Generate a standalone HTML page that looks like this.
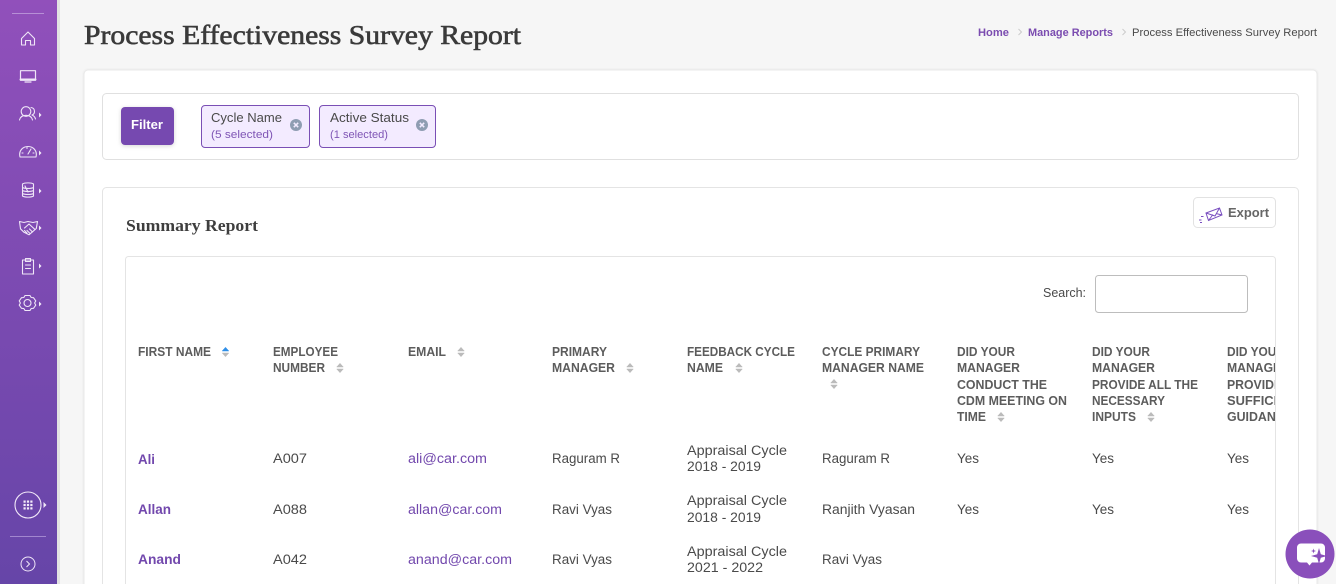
<!DOCTYPE html>
<html lang="en">
<head>
<meta charset="utf-8">
<title>Process Effectiveness Survey Report</title>
<style>
html,body{margin:0;padding:0;width:1336px;height:584px;overflow:hidden;background:#f6f6f6}
svg{position:absolute;left:0;top:0;display:block}
text{font-family:"Liberation Sans",sans-serif;white-space:pre}
.s{font-family:"Liberation Serif",serif}
.h{font-size:12.5px;font-weight:700;fill:#5c5c5c}
.d{font-size:13.5px;fill:#4a4a4a}
.l{font-size:13.5px;fill:#7248ad}
.b{font-size:13.5px;font-weight:700;fill:#7248ad}
.ic{fill:none;stroke:#efe6f7;stroke-width:1.1;stroke-linecap:round;stroke-linejoin:round}
</style>
</head>
<body>
<svg width="1336" height="584" viewBox="0 0 1336 584" xmlns="http://www.w3.org/2000/svg">
<defs>
<linearGradient id="g" x1="0" y1="0" x2="0" y2="1"><stop offset="0" stop-color="#9150bb"/><stop offset="1" stop-color="#6645a8"/></linearGradient>
<clipPath id="tc"><rect x="126" y="257" width="1149" height="327"/></clipPath>
<filter id="sh" x="-20%" y="-20%" width="140%" height="140%"><feDropShadow dx="0" dy="1" stdDeviation="2" flood-color="#000" flood-opacity=".16"/></filter>
<filter id="sh2" x="-5%" y="-5%" width="110%" height="110%"><feDropShadow dx="0" dy="0" stdDeviation="1" flood-color="#000" flood-opacity=".07"/></filter>
<g id="sort" fill="#bbb" stroke="#bbb" stroke-width=".5" stroke-linejoin="round"><path d="M-3.300 -1L0 -4.700L3.300 -1Z"/><path d="M-3.300 1L0 4.700L3.300 1Z"/></g>
<path id="tri" d="M0 -2.500L2.500 0L0 2.500Z" fill="#f1e8f8"/>
</defs>

<!-- sidebar -->
<rect x="57" y="0" width="3" height="584" fill="#e2e2e2"/>
<rect x="0" y="0" width="57" height="584" fill="url(#g)"/>
<rect x="12" y="13" width="32" height="1" fill="#b78fd6"/>
<g class="ic">
<path d="M21.500 38.500L28 32l6.500 6.500V45h-4v-4.500h-5V45h-4z"/>
<path d="M20.500 70.700h15v9.600h-15z" stroke-width="1.200"/><path d="M20.500 79.500h15" stroke-width="2"/><path d="M25 82h6" stroke-width="1.200"/>
<circle cx="26" cy="111.500" r="4.800"/><path d="M19.500 120c.8-3.500 3.500-4.700 6.500-4.700s5.700 1.200 6.500 4.700M31 107.500c2.500.3 3.500 2 3.500 4s-1 3-2.500 3.500c1.500.6 3 2 3.500 4"/>
<path d="M20 157c-1.500-6 2.500-10.500 8-10.500s9.500 4.500 8 10.500zM28 154l3-5M23 153h-1M34 153h-1M27 147v1.500"/>
<path d="M22.500 184c2-1.500 9-1.500 11 0v12c-2 1.500-9 1.500-11 0zM22.500 187.500c2 1.300 9 1.300 11 0M22.500 190.500c2 1.300 9 1.300 11 0M22.500 193.500c2 1.300 9 1.300 11 0M25 186l3 6"/>
<path d="M19.500 221.500l4.500 1 4-1 5 1 4.500-1-1.200 7-7.300 6.300-5-2.500-3.500-3.500zM24.500 228l4.500-4 6 5.500M27 233l-2.500-2.500M30 233.500l-3-3M32.500 232l-3-3"/>
<path d="M22.500 260h11v14h-11zM25.500 258.500h5v3h-5zM25.500 265h5M25.500 268.500h5"/>
<circle cx="27.500" cy="303" r="3.500"/><path d="M25 295.500h5l1.200 2 2.300.2 2.300 3.200-1.200 2.100 1.200 2.100-2.300 3.200-2.300.2-1.200 2h-5l-1.200-2-2.300-.2-2.300-3.200 1.200-2.100-1.200-2.100 2.300-3.200 2.300-.2z"/>
</g>
<use href="#tri" x="39" y="115"/><use href="#tri" x="39" y="153"/><use href="#tri" x="39" y="191"/><use href="#tri" x="39" y="228"/><use href="#tri" x="39" y="266"/><use href="#tri" x="39" y="304"/>
<circle cx="28" cy="505" r="13" fill="none" stroke="#f1e8f8" stroke-width="1.100"/>
<g fill="#f4ecfa"><rect x="23.500" y="500.500" width="2.200" height="2.200"/><rect x="26.900" y="500.500" width="2.200" height="2.200"/><rect x="30.300" y="500.500" width="2.200" height="2.200"/><rect x="23.500" y="503.900" width="2.200" height="2.200"/><rect x="26.900" y="503.900" width="2.200" height="2.200"/><rect x="30.300" y="503.900" width="2.200" height="2.200"/><rect x="23.500" y="507.300" width="2.200" height="2.200"/><rect x="26.900" y="507.300" width="2.200" height="2.200"/><rect x="30.300" y="507.300" width="2.200" height="2.200"/></g>
<path d="M43.500 502l3 3-3 3z" fill="#f1e8f8"/>
<rect x="10" y="536" width="36" height="1" fill="#a286cf"/>
<circle cx="28" cy="564" r="7" fill="none" stroke="#efe6f7" stroke-width="1"/>
<path d="M26.500 561l3 3-3 3" fill="none" stroke="#efe6f7" stroke-width="1"/>

<!-- header -->
<text class="s" x="84" y="44" font-size="27" fill="#3a3a3a" stroke="#3a3a3a" stroke-width=".6" textLength="437" lengthAdjust="spacingAndGlyphs">Process Effectiveness Survey Report</text>
<text x="978" y="36" font-size="11" font-weight="700" fill="#7b4cb0" textLength="31" lengthAdjust="spacingAndGlyphs">Home</text>
<path d="M1018.500 29l3 3-3 3M1122.500 29l3 3-3 3" fill="none" stroke="#ccc" stroke-width="1"/>
<text x="1028" y="36" font-size="11" font-weight="700" fill="#7b4cb0" textLength="85" lengthAdjust="spacingAndGlyphs">Manage Reports</text>
<text x="1132" y="36" font-size="11" fill="#4a4a4a" textLength="185" lengthAdjust="spacingAndGlyphs">Process Effectiveness Survey Report</text>

<!-- main card -->
<rect x="84" y="70" width="1233" height="530" rx="4" fill="#fff" stroke="#e8e8e8" filter="url(#sh2)"/>
<rect x="102.500" y="93.500" width="1196" height="66" rx="4" fill="#fff" stroke="#e0e0e0"/>
<rect x="121" y="107" width="53" height="38" rx="4" fill="#7649b0" filter="url(#sh)"/>
<text x="131" y="129" font-size="12.500" font-weight="700" fill="#fff" textLength="32" lengthAdjust="spacingAndGlyphs">Filter</text>

<rect x="201.500" y="105.500" width="108" height="42" rx="3.500" fill="#f3ebff" stroke="#7a4fb5"/>
<text x="211" y="122" font-size="13" fill="#4a4a4a" textLength="71" lengthAdjust="spacingAndGlyphs">Cycle Name</text>
<text x="211" y="138" font-size="11" fill="#7f55b5" textLength="62" lengthAdjust="spacingAndGlyphs">(5 selected)</text>
<circle cx="296" cy="125" r="6" fill="#8f9db2"/>
<path d="M293.800 122.800l4.400 4.400M298.200 122.800l-4.400 4.400" stroke="#f3ebff" stroke-width="1.500"/>

<rect x="319.500" y="105.500" width="116" height="42" rx="3.500" fill="#f3ebff" stroke="#7a4fb5"/>
<text x="330" y="122" font-size="13" fill="#4a4a4a" textLength="79" lengthAdjust="spacingAndGlyphs">Active Status</text>
<text x="330" y="138" font-size="11" fill="#7f55b5" textLength="58" lengthAdjust="spacingAndGlyphs">(1 selected)</text>
<circle cx="422" cy="125" r="6" fill="#8f9db2"/>
<path d="M419.800 122.800l4.400 4.400M424.200 122.800l-4.400 4.400" stroke="#f3ebff" stroke-width="1.500"/>

<!-- summary -->
<rect x="102.500" y="187.500" width="1196" height="420" rx="4" fill="#fff" stroke="#e4e4e4"/>
<text class="s" x="126" y="231" font-size="17" font-weight="700" fill="#3e3e3e" textLength="132" lengthAdjust="spacingAndGlyphs">Summary Report</text>
<rect x="1193.500" y="197.500" width="82" height="30" rx="4" fill="#fff" stroke="#e2e2e2"/>
<path d="M1206 213l13.500-5 2.500 7-13.500 5.500zM1206 213l9 3 4.500-8M1208.500 220.500l4.500-6M1222 215l-6-1.500" fill="none" stroke="#7a4fc0" stroke-width="1"/>
<path d="M1201 216.500h2.500M1199 220h2.500M1200 222.500h2" stroke="#7a4fc0" stroke-width="1"/>
<text x="1228" y="217" font-size="13" font-weight="700" fill="#666" textLength="41" lengthAdjust="spacingAndGlyphs">Export</text>

<rect x="125.500" y="256.500" width="1150" height="340" rx="3" fill="#fff" stroke="#e4e4e4"/>
<text x="1043" y="297" font-size="12.500" fill="#4a4a4a" textLength="43" lengthAdjust="spacingAndGlyphs">Search:</text>
<rect x="1095.500" y="275.500" width="152" height="37" rx="3" fill="#fff" stroke="#bdbdbd"/>

<g clip-path="url(#tc)">
<text class="h" x="138" y="356" textLength="73" lengthAdjust="spacingAndGlyphs">FIRST NAME</text>
<text class="h" x="273" y="356" textLength="65" lengthAdjust="spacingAndGlyphs">EMPLOYEE</text>
<text class="h" x="273" y="372" textLength="52" lengthAdjust="spacingAndGlyphs">NUMBER</text>
<text class="h" x="408" y="356" textLength="38" lengthAdjust="spacingAndGlyphs">EMAIL</text>
<text class="h" x="552" y="356" textLength="55" lengthAdjust="spacingAndGlyphs">PRIMARY</text>
<text class="h" x="552" y="372" textLength="63" lengthAdjust="spacingAndGlyphs">MANAGER</text>
<text class="h" x="687" y="356" textLength="108" lengthAdjust="spacingAndGlyphs">FEEDBACK CYCLE</text>
<text class="h" x="687" y="372" textLength="36" lengthAdjust="spacingAndGlyphs">NAME</text>
<text class="h" x="822" y="356" textLength="98" lengthAdjust="spacingAndGlyphs">CYCLE PRIMARY</text>
<text class="h" x="822" y="372" textLength="102" lengthAdjust="spacingAndGlyphs">MANAGER NAME</text>
<text class="h" x="957" y="356" textLength="58" lengthAdjust="spacingAndGlyphs">DID YOUR</text>
<text class="h" x="957" y="372" textLength="63" lengthAdjust="spacingAndGlyphs">MANAGER</text>
<text class="h" x="957" y="389" textLength="90" lengthAdjust="spacingAndGlyphs">CONDUCT THE</text>
<text class="h" x="957" y="405" textLength="110" lengthAdjust="spacingAndGlyphs">CDM MEETING ON</text>
<text class="h" x="957" y="421" textLength="29" lengthAdjust="spacingAndGlyphs">TIME</text>
<text class="h" x="1092" y="356" textLength="58" lengthAdjust="spacingAndGlyphs">DID YOUR</text>
<text class="h" x="1092" y="372" textLength="63" lengthAdjust="spacingAndGlyphs">MANAGER</text>
<text class="h" x="1092" y="389" textLength="106" lengthAdjust="spacingAndGlyphs">PROVIDE ALL THE</text>
<text class="h" x="1092" y="405" textLength="73" lengthAdjust="spacingAndGlyphs">NECESSARY</text>
<text class="h" x="1092" y="421" textLength="44" lengthAdjust="spacingAndGlyphs">INPUTS</text>
<text class="h" x="1227" y="356" textLength="58" lengthAdjust="spacingAndGlyphs">DID YOUR</text>
<text class="h" x="1227" y="372" textLength="63" lengthAdjust="spacingAndGlyphs">MANAGER</text>
<text class="h" x="1227" y="389" textLength="64" lengthAdjust="spacingAndGlyphs">PROVIDED</text>
<text class="h" x="1227" y="405" textLength="76" lengthAdjust="spacingAndGlyphs">SUFFICIENT</text>
<text class="h" x="1227" y="421" textLength="66" lengthAdjust="spacingAndGlyphs">GUIDANCE</text>

<path d="M222.200 351L225.500 347.300L228.800 351Z" fill="#2f8fe8" stroke="#2f8fe8" stroke-width=".5" stroke-linejoin="round"/><path d="M222.200 353L225.500 356.700L228.800 353Z" fill="#bbb" stroke="#bbb" stroke-width=".5" stroke-linejoin="round"/>
<use href="#sort" x="340" y="368"/><use href="#sort" x="461" y="352"/><use href="#sort" x="630" y="368"/><use href="#sort" x="739" y="368"/><use href="#sort" x="834" y="384"/><use href="#sort" x="1001" y="417"/><use href="#sort" x="1151" y="417"/>

<!-- row 1 -->
<text class="b" x="138" y="464" textLength="17" lengthAdjust="spacingAndGlyphs">Ali</text>
<text class="d" x="273" y="463" textLength="34" lengthAdjust="spacingAndGlyphs">A007</text>
<text class="l" x="408" y="463" textLength="79" lengthAdjust="spacingAndGlyphs">ali@car.com</text>
<text class="d" x="552" y="463" textLength="68" lengthAdjust="spacingAndGlyphs">Raguram R</text>
<text class="d" x="687" y="455" textLength="100" lengthAdjust="spacingAndGlyphs">Appraisal Cycle</text>
<text class="d" x="687" y="471" textLength="74" lengthAdjust="spacingAndGlyphs">2018 - 2019</text>
<text class="d" x="822" y="463" textLength="68" lengthAdjust="spacingAndGlyphs">Raguram R</text>
<text class="d" x="957" y="463" textLength="22" lengthAdjust="spacingAndGlyphs">Yes</text>
<text class="d" x="1092" y="463" textLength="22" lengthAdjust="spacingAndGlyphs">Yes</text>
<text class="d" x="1227" y="463" textLength="22" lengthAdjust="spacingAndGlyphs">Yes</text>
<!-- row 2 -->
<text class="b" x="138" y="514" textLength="33" lengthAdjust="spacingAndGlyphs">Allan</text>
<text class="d" x="273" y="514" textLength="34" lengthAdjust="spacingAndGlyphs">A088</text>
<text class="l" x="408" y="514" textLength="94" lengthAdjust="spacingAndGlyphs">allan@car.com</text>
<text class="d" x="552" y="514" textLength="60" lengthAdjust="spacingAndGlyphs">Ravi Vyas</text>
<text class="d" x="687" y="505" textLength="100" lengthAdjust="spacingAndGlyphs">Appraisal Cycle</text>
<text class="d" x="687" y="522" textLength="74" lengthAdjust="spacingAndGlyphs">2018 - 2019</text>
<text class="d" x="822" y="514" textLength="93" lengthAdjust="spacingAndGlyphs">Ranjith Vyasan</text>
<text class="d" x="957" y="514" textLength="22" lengthAdjust="spacingAndGlyphs">Yes</text>
<text class="d" x="1092" y="514" textLength="22" lengthAdjust="spacingAndGlyphs">Yes</text>
<text class="d" x="1227" y="514" textLength="22" lengthAdjust="spacingAndGlyphs">Yes</text>
<!-- row 3 -->
<text class="b" x="138" y="564" textLength="43" lengthAdjust="spacingAndGlyphs">Anand</text>
<text class="d" x="273" y="564" textLength="34" lengthAdjust="spacingAndGlyphs">A042</text>
<text class="l" x="408" y="564" textLength="104" lengthAdjust="spacingAndGlyphs">anand@car.com</text>
<text class="d" x="552" y="564" textLength="60" lengthAdjust="spacingAndGlyphs">Ravi Vyas</text>
<text class="d" x="687" y="556" textLength="100" lengthAdjust="spacingAndGlyphs">Appraisal Cycle</text>
<text class="d" x="687" y="572" textLength="76" lengthAdjust="spacingAndGlyphs">2021 - 2022</text>
<text class="d" x="822" y="564" textLength="60" lengthAdjust="spacingAndGlyphs">Ravi Vyas</text>
</g>

<!-- chat -->
<circle cx="1310" cy="554" r="24.500" fill="#8a4fbb"/>
<path d="M1301 543.500h20a4 4 0 0 1 4 4v11a4 4 0 0 1-4 4h-9l-2.500 3-2.500-3h-6a4 4 0 0 1-4-4v-11a4 4 0 0 1 4-4z" fill="#fff"/>
<path d="M1319 548l1.800 6.200 6.200 1.800-6.200 1.800-1.800 6.200-1.800-6.200-6.200-1.800 6.200-1.800z" fill="#8a4fbb"/>
<path d="M1313.500 548.500l.6 1.900 1.900.6-1.900.6-.6 1.900-.6-1.900-1.900-.6 1.900-.6z" fill="#8a4fbb"/>
</svg>
</body>
</html>
